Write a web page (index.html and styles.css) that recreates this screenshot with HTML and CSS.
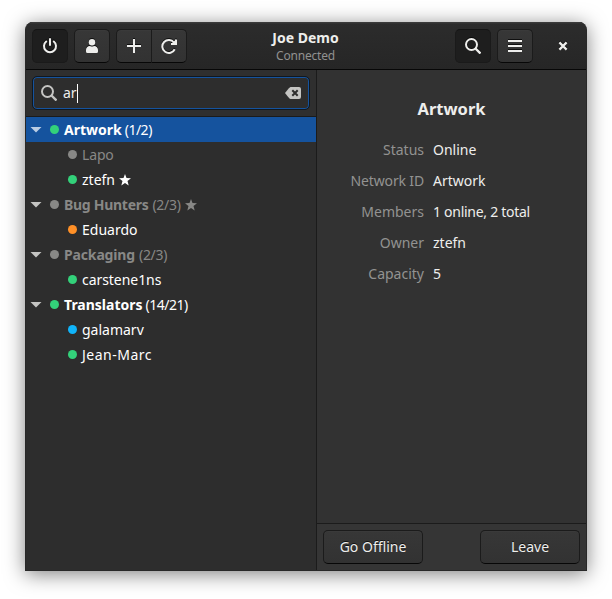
FILE: index.html
```html
<!DOCTYPE html>
<html lang="en">
<head>
<meta charset="utf-8">
<title>Joe Demo</title>
<link rel="stylesheet" href="styles.css">
</head>
<body>
<div class="window">
  <header class="header">
    <div class="group">
      <button class="btn active" aria-label="Power"><svg width="16" height="16" viewBox="0 0 16 16" fill="none" stroke="currentColor" stroke-width="2" stroke-linecap="round"><path d="M4.200 3.500a6 6 0 1 0 7.600 0M8 1v6"/></svg></button>
      <button class="btn" aria-label="Account"><svg width="16" height="16" viewBox="0 0 16 16" fill="currentColor"><circle cx="8" cy="4.200" r="3.200"/><path d="M6 8Q8 9 10 8C12.500 8 14 9.800 14 12V13.500Q14 15 12.500 15H3.500Q2 15 2 13.500V12C2 9.800 3.500 8 6 8Z"/></svg></button>
      <div class="linked">
        <button class="btn" aria-label="Add"><svg width="16" height="16" viewBox="0 0 16 16" fill="none" stroke="currentColor" stroke-width="2"><path d="M8 1v14M1 8h14"/></svg></button>
        <button class="btn" aria-label="Refresh"><svg width="16" height="16" viewBox="0 0 16 16" fill="none" stroke="currentColor" stroke-width="2"><path d="M13 4.500A6.500 6.500 0 1 0 13.700 11.200M10 6H15V1.500"/><path d="M10 6l5-4.500V6z" fill="currentColor" stroke="none"/></svg></button>
      </div>
    </div>
    <div class="titles">
      <div class="title">Joe Demo</div>
      <div class="subtitle">Connected</div>
    </div>
    <div class="group end">
      <button class="btn active" aria-label="Search"><svg width="16" height="16" viewBox="0 0 16 16" fill="none" stroke="currentColor" stroke-width="2"><circle cx="6.500" cy="6.500" r="5.500"/><path d="M10.500 10.500l5 5" stroke-width="2.400"/></svg></button>
      <button class="btn" aria-label="Menu"><svg width="16" height="16" viewBox="0 0 16 16" fill="currentColor"><path d="M1 2h14v2H1zM1 7h14v2H1zM1 12h14v2H1z"/></svg></button>
      <button class="close" aria-label="Close"><svg width="16" height="16" viewBox="0 0 16 16" fill="none" stroke="currentColor" stroke-width="2.200"><path d="M4.400 4.400l7.200 7.200M11.600 4.400l-7.200 7.200"/></svg></button>
    </div>
  </header>
  <main class="body">
    <section class="sidebar">
      <div class="searchbar">
        <div class="entry">
          <svg width="16" height="16" viewBox="0 0 16 16" fill="none" stroke="currentColor" stroke-width="2"><circle cx="6.500" cy="6.500" r="5.500"/><path d="M10.500 10.500l5 5" stroke-width="2.400"/></svg>
          <span class="query">ar</span><span class="caret"></span>
          <svg class="clear" width="16" height="12" viewBox="0 0 16 12"><path d="M5.500 0H14q2 0 2 2v8q0 2-2 2H5.500Q4.500 12 0 6 4.500 0 5.500 0z" fill="currentColor"/><path d="M7.300 3.300l5.400 5.400M12.700 3.300L7.300 8.700" stroke="#2d2d2d" stroke-width="2"/></svg>
        </div>
      </div>
      <div class="tree">
        <div class="row net selected"><i class="arrow"></i><i class="dot green"></i><b>Artwork</b><span class="count">(1/2)</span></div>
        <div class="row member dim"><i class="dot gray"></i><span class="tight">Lapo</span></div>
        <div class="row member"><i class="dot green"></i><span>ztefn</span><svg class="star" width="12" height="12" viewBox="0 0 12 12"><path d="M6 0l1.500 4.100 4.500.2-3.500 2.800 1.200 4.500L6 9.100l-3.700 2.500 1.200-4.500L0 4.300l4.500-.2z" fill="currentColor"/></svg></div>
        <div class="row net dim"><i class="arrow"></i><i class="dot gray"></i><b class="tighter">Bug Hunters</b><span class="count far">(2/3)</span><svg class="star" width="12" height="12" viewBox="0 0 12 12"><path d="M6 0l1.500 4.100 4.500.2-3.500 2.800 1.200 4.500L6 9.100l-3.700 2.500 1.200-4.500L0 4.300l4.500-.2z" fill="currentColor"/></svg></div>
        <div class="row member"><i class="dot orange"></i><span>Eduardo</span></div>
        <div class="row net dim"><i class="arrow"></i><i class="dot gray"></i><b class="tight">Packaging</b><span class="count far">(2/3)</span></div>
        <div class="row member"><i class="dot green"></i><span class="loose">carstene1ns</span></div>
        <div class="row net"><i class="arrow"></i><i class="dot green"></i><b>Translators</b><span class="count">(14/21)</span></div>
        <div class="row member"><i class="dot blue"></i><span>galamarv</span></div>
        <div class="row member"><i class="dot green"></i><span class="wider">Jean-Marc</span></div>
      </div>
    </section>
    <section class="detail">
      <div class="info">
        <h1>Artwork</h1>
        <dl>
          <dt>Status</dt><dd>Online</dd>
          <dt class="tight">Network ID</dt><dd>Artwork</dd>
          <dt>Members</dt><dd class="tighter">1 online, 2 total</dd>
          <dt>Owner</dt><dd>ztefn</dd>
          <dt>Capacity</dt><dd>5</dd>
        </dl>
      </div>
      <footer class="actions">
        <button class="btn text"><span>Go Offline</span></button>
        <button class="btn text"><span>Leave</span></button>
      </footer>
    </section>
  </main>
</div>
</body>
</html>
```
FILE: styles.css
```css
* { box-sizing: border-box; }
body {
  margin: 0;
  padding: 22px 25px 28px;
  height: 599px;
  overflow: hidden;
  background: #fff;
  color: #eeeeec;
  font: 14px/25px "Noto Sans", sans-serif;
}
.window {
  width: 562px;
  height: 549px;
  display: flex;
  flex-direction: column;
  border-radius: 8px 8px 0 0;
  overflow: hidden;
  border: solid #282828;
  border-width: 0 1px 1px;
  background: #2d2d2d;
  box-shadow: 0 3px 20px rgba(0,0,0,.5);
}
.header {
  height: 48px;
  flex: none;
  display: grid;
  grid-template-columns: 1fr auto 1fr;
  padding: 0 6px;
  align-items: start;
  border-bottom: 1px solid #070707;
  box-shadow: inset 0 1px #3a3a3a, inset 0 2px #323232;
  background: linear-gradient(#2c2c2c, #262626);
}
.group { display: flex; gap: 6px; padding-top: 7px; }
.end { justify-content: flex-end; margin-right: -1px; }
.linked { display: flex; }
.btn {
  width: 36px;
  height: 34px;
  padding: 0;
  display: flex;
  align-items: center;
  justify-content: center;
  border: 1px solid #1b1b1b;
  border-bottom-color: #070707;
  border-radius: 5px;
  background: linear-gradient(#373737, #323232);
  box-shadow: inset 0 1px rgba(255,255,255,.02);
  color: #eeeeec;
  font: inherit;
}
.btn svg, .close svg { filter: drop-shadow(0 -1px rgba(0,0,0,.7)); }
.active { background: #1e1e1e; border-color: #141414 #1a1a1a #1a1a1a; box-shadow: none; }
.linked .btn:first-child { width: 35px; border-radius: 5px 0 0 5px; border-right: 0; }
.linked .btn:last-child { border-radius: 0 5px 5px 0; }
.close {
  width: 36px;
  height: 34px;
  margin-left: 6px;
  padding: 0;
  display: flex;
  align-items: center;
  justify-content: center;
  border: 0;
  background: none;
  color: #eeeeec;
}
.titles { text-align: center; padding-top: 7px; margin-left: -1px; }
.title { font-weight: 700; line-height: 18px; }
.subtitle { font-size: 12px; line-height: 17px; color: #919190; letter-spacing: -.2px; }
.body { flex: 1; display: flex; min-height: 0; }
.sidebar { width: 291px; border-right: 1px solid #1b1b1b; background: #2d2d2d; }
.searchbar { height: 47px; padding: 6px; border-bottom: 1px solid #1b1b1b; background: #2f2f2f; }
.entry {
  height: 34px;
  display: flex;
  align-items: center;
  padding: 0 8px;
  border: 1px solid #101820;
  border-radius: 5px;
  box-shadow: inset 0 0 0 1px #15539e;
  background: #2d2d2d;
}
.entry svg { color: #c4c4c2; }
.query { margin-left: 6px; padding-bottom: 2px; }
.caret { width: 1px; height: 19px; background: #fff; }
.clear { margin-left: auto; }
.row { height: 25px; display: flex; align-items: center; white-space: nowrap; color: #fff; }
.net { padding-left: 4px; }
.member { padding-left: 42px; }
.selected { background: #15539e; }
.dim { color: #888886; }
.arrow {
  width: 12px;
  height: 6px;
  margin-right: 8px;
  background: #c4c4c2;
  clip-path: polygon(0 0, 100% 0, 50% 100%);
}
.selected .arrow { background: #bacde4; }
.dot { width: 9px; height: 9px; margin-right: 5px; border-radius: 50%; }
.green { background: #33d17a; }
.gray { background: #888886; }
.orange { background: #ff9027; }
.blue { background: #10b4fa; }
.count { margin-left: 3px; letter-spacing: -.5px; }
.far { margin-left: 4px; letter-spacing: -.3px; }
.star { margin-left: 4px; }
.tight { letter-spacing: -.15px; }
.tighter { letter-spacing: -.28px; }
.loose { letter-spacing: -.05px; }
.wider { letter-spacing: .5px; }
.detail { flex: 1; display: flex; flex-direction: column; background: #323232; }
.info { flex: 1; padding-top: 26px; }
h1 { margin: 0; font-size: 16.5px; line-height: 25px; text-align: center; }
dl {
  margin: 13px 0 0;
  display: grid;
  grid-template-columns: 107px 1fr;
  column-gap: 9px;
  grid-auto-rows: 31px;
  line-height: 31px;
}
dt { justify-self: end; color: #929291; white-space: nowrap; }
dd { margin: 0; justify-self: start; white-space: nowrap; }
.actions {
  height: 47px;
  display: flex;
  justify-content: space-between;
  padding: 6px;
  border-top: 1px solid #1b1b1b;
  background: #353535;
}
.text { width: 100px; padding-bottom: 2px; text-shadow: 0 -1px rgba(0,0,0,.7); }
```
